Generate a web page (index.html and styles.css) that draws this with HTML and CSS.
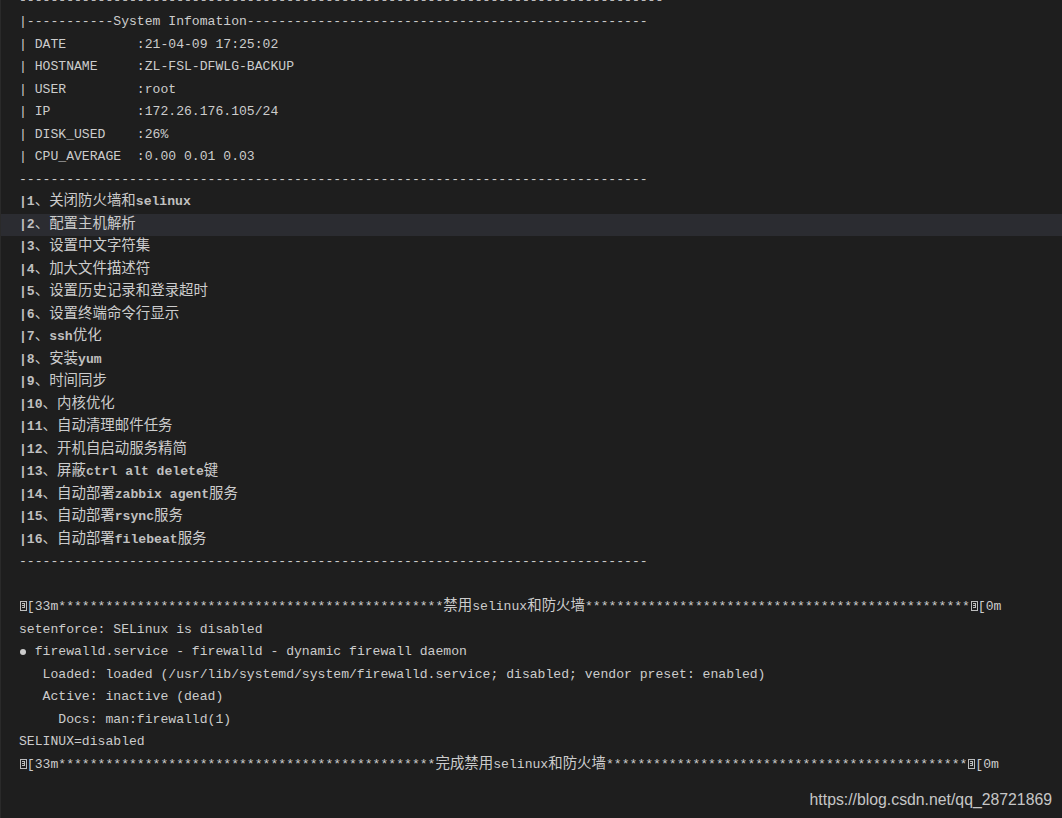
FILE: index.html
```html
<!DOCTYPE html>
<html lang="zh-CN">
<head>
<meta charset="utf-8">
<title>Terminal</title>
<link rel="stylesheet" href="styles.css">
</head>
<body>
<div class="term">
  <div class="ln top">----------------------------------------------------------------------------------</div>
  <div class="ln">|-----------System Infomation---------------------------------------------------</div>
  <div class="ln">| DATE         :21-04-09 17:25:02</div>
  <div class="ln">| HOSTNAME     :ZL-FSL-DFWLG-BACKUP</div>
  <div class="ln">| USER         :root</div>
  <div class="ln">| IP           :172.26.176.105/24</div>
  <div class="ln">| DISK_USED    :26%</div>
  <div class="ln">| CPU_AVERAGE  :0.00 0.01 0.03</div>
  <div class="ln">--------------------------------------------------------------------------------</div>
  <div class="ln b">|1<span class="z">、关闭防火墙和</span>selinux</div>
  <div class="ln b hl">|2<span class="z">、配置主机解析</span></div>
  <div class="ln b">|3<span class="z">、设置中文字符集</span></div>
  <div class="ln b">|4<span class="z">、加大文件描述符</span></div>
  <div class="ln b">|5<span class="z">、设置历史记录和登录超时</span></div>
  <div class="ln b">|6<span class="z">、设置终端命令行显示</span></div>
  <div class="ln b">|7<span class="z">、</span>ssh<span class="z">优化</span></div>
  <div class="ln b">|8<span class="z">、安装</span>yum</div>
  <div class="ln b">|9<span class="z">、时间同步</span></div>
  <div class="ln b">|10<span class="z">、内核优化</span></div>
  <div class="ln b">|11<span class="z">、自动清理邮件任务</span></div>
  <div class="ln b">|12<span class="z">、开机自启动服务精简</span></div>
  <div class="ln b">|13<span class="z">、屏蔽</span>ctrl alt delete<span class="z">键</span></div>
  <div class="ln b">|14<span class="z">、自动部署</span>zabbix agent<span class="z">服务</span></div>
  <div class="ln b">|15<span class="z">、自动部署</span>rsync<span class="z">服务</span></div>
  <div class="ln b">|16<span class="z">、自动部署</span>filebeat<span class="z">服务</span></div>
  <div class="ln">--------------------------------------------------------------------------------</div>
  <div class="ln"> </div>
  <div class="ln"><span class="esc"></span>[33m*************************************************<span class="z">禁用</span>selinux<span class="z">和防火墙</span>*************************************************<span class="esc"></span>[0m</div>
  <div class="ln">setenforce: SELinux is disabled</div>
  <div class="ln"><span class="dot"></span> firewalld.service - firewalld - dynamic firewall daemon</div>
  <div class="ln">   Loaded: loaded (/usr/lib/systemd/system/firewalld.service; disabled; vendor preset: enabled)</div>
  <div class="ln">   Active: inactive (dead)</div>
  <div class="ln">     Docs: man:firewalld(1)</div>
  <div class="ln">SELINUX=disabled</div>
  <div class="ln"><span class="esc"></span>[33m************************************************<span class="z">完成禁用</span>selinux<span class="z">和防火墙</span>**********************************************<span class="esc"></span>[0m</div>
</div>
<div class="mark">https://blog.csdn.net/qq_28721869</div>
</body>
</html>
```

FILE: styles.css
```css
html, body {
  margin: 0;
  padding: 0;
  background: #1e1e1e;
  height: 100%;
  overflow: hidden;
}

body {
  border-left: 1px solid #2a2a2a;
  box-sizing: border-box;
  position: relative;
}

.term {
  padding-left: 18px;
  padding-top: 11px;
  font-family: "Liberation Mono", "Noto Sans CJK SC", monospace;
  font-size: 13.1px;
  color: #cccccc;
}

.ln {
  height: 22.5px;
  line-height: 22.5px;
  white-space: pre;
  margin-left: -18px;
  padding-left: 18px;
}

.top {
  margin-top: -21px;
  height: 21px;
  line-height: 21px;
  color: #bcbcbc;
  font-weight: bold;
}

.b {
  font-weight: bold;
  color: #c0c0c0;
}

.hl {
  background: #2b2c31;
}

.z {
  font-family: "Noto Sans CJK SC", sans-serif;
  font-size: 14.45px;
  font-weight: normal;
  line-height: 0;
  color: #cccccc;
}

.esc {
  display: inline-block;
  width: 7.86px;
  height: 10px;
  vertical-align: -1px;
  position: relative;
}

.esc::before {
  content: "";
  position: absolute;
  left: 1px;
  top: 0;
  width: 5px;
  height: 8px;
  border: 1px solid #bdbdbd;
  background:
    linear-gradient(#bdbdbd, #bdbdbd) 1px 1px / 3px 1px no-repeat,
    linear-gradient(#bdbdbd, #bdbdbd) 1px 3px / 3px 1px no-repeat,
    linear-gradient(#bdbdbd, #bdbdbd) 1px 5px / 3px 1px no-repeat,
    linear-gradient(#bdbdbd, #bdbdbd) 3px 1px / 1px 5px no-repeat;
}

.dot {
  display: inline-block;
  width: 7.86px;
  height: 6px;
  position: relative;
}

.dot::before {
  content: "";
  position: absolute;
  left: 1px;
  top: 0;
  width: 6px;
  height: 6px;
  border-radius: 50%;
  background: #cccccc;
}

.mark {
  position: absolute;
  right: 10px;
  bottom: 9px;
  font-family: "Liberation Sans", Arial, sans-serif;
  font-size: 15.8px;
  color: #c6c6c6;
  white-space: nowrap;
}
```
